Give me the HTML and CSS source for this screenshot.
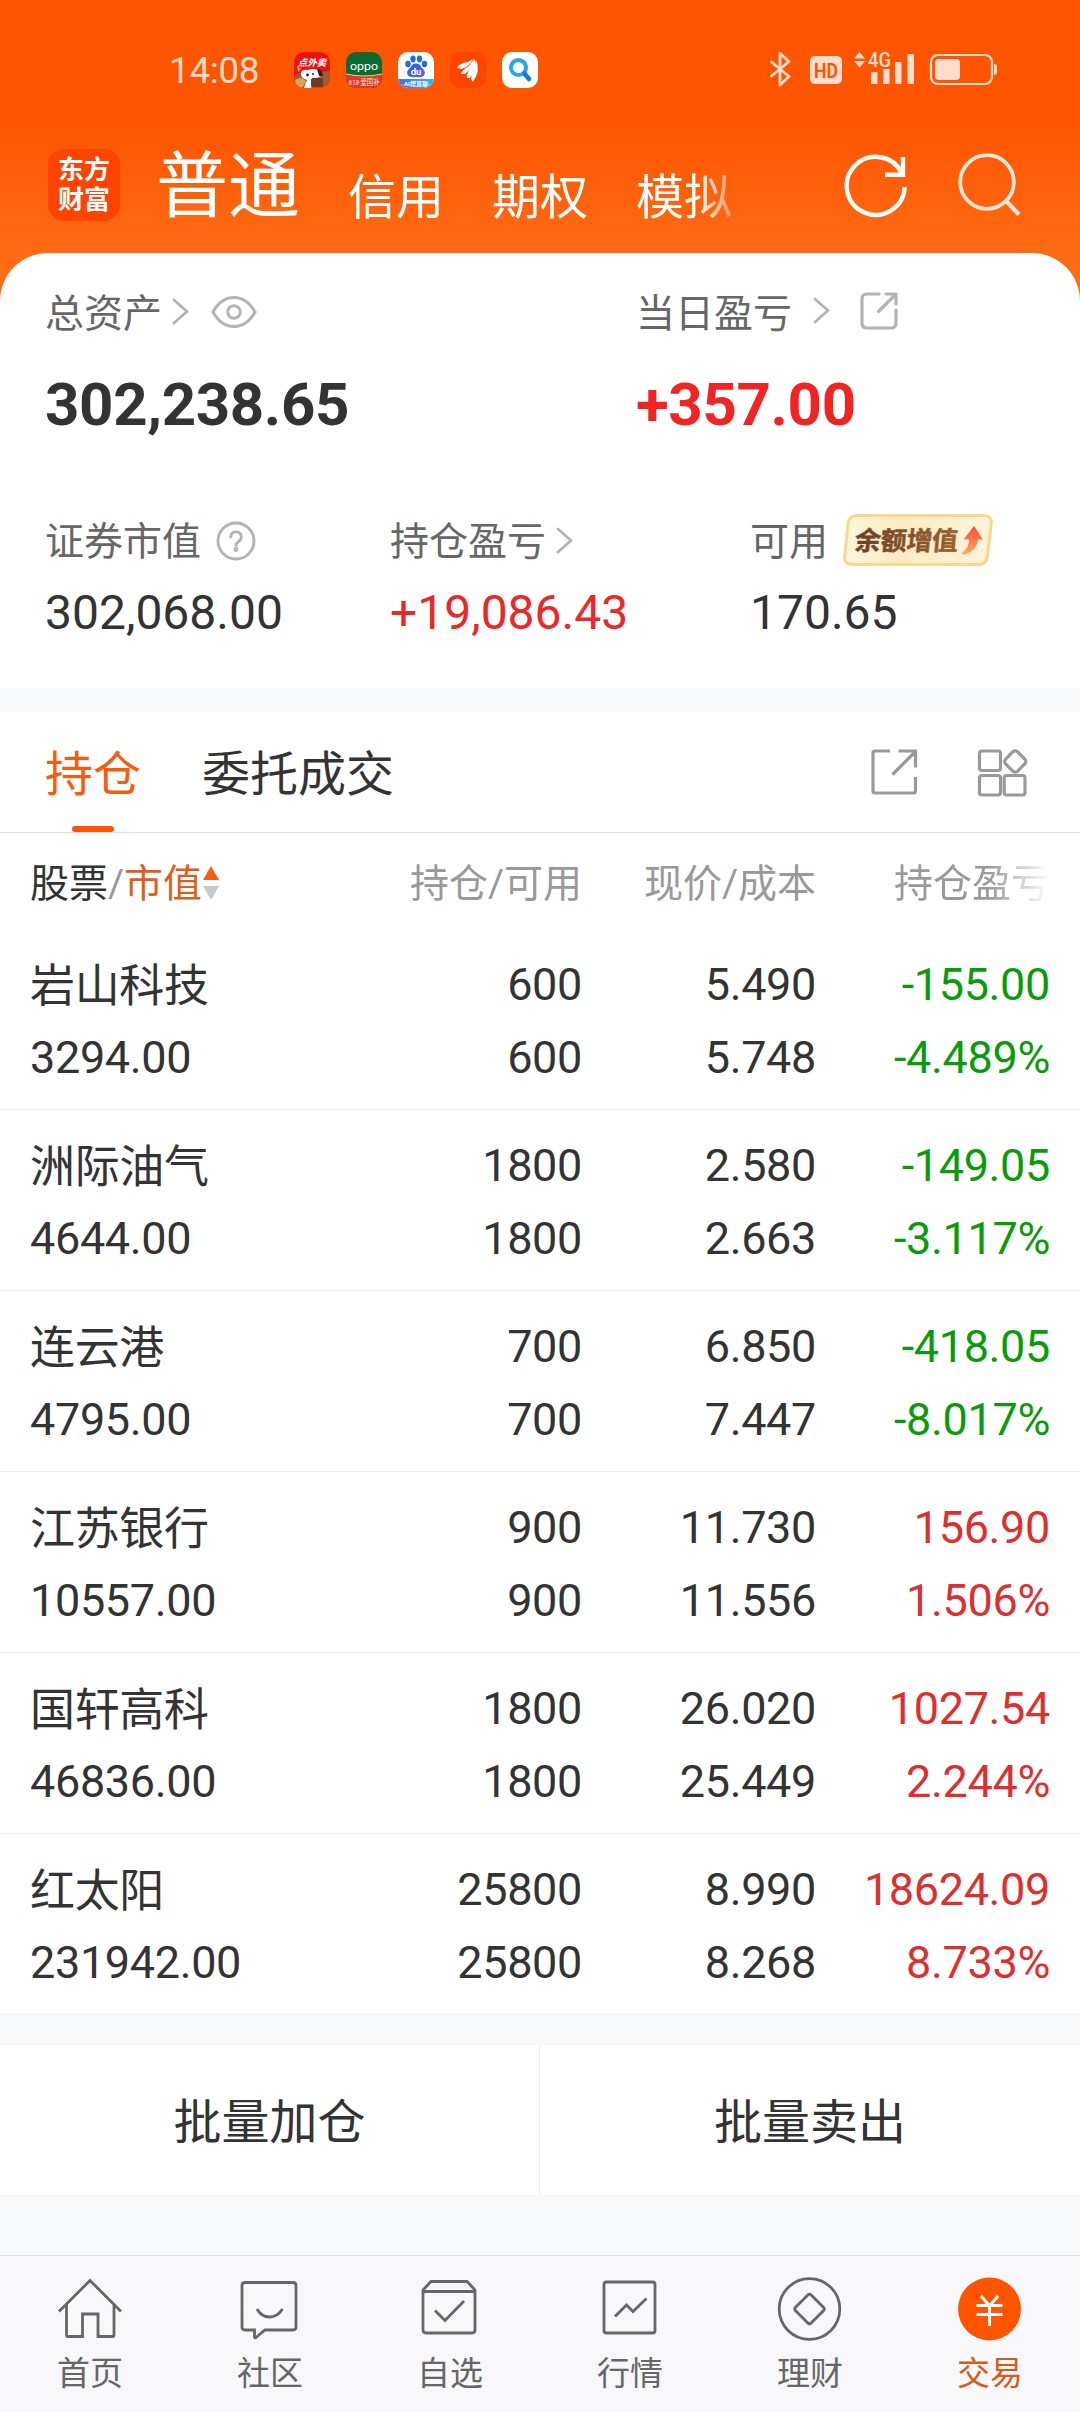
FILE: index.html
```html
<!DOCTYPE html>
<html lang="zh-CN">
<head>
<meta charset="utf-8">
<title>普通交易 - 持仓</title>
<link rel="stylesheet" href="styles.css">
</head>
<body>
<div class="app">
  <div class="status">
    <span class="clock">14:08</span>
    <div class="notices">
      <svg width="36" height="36" viewBox="0 0 36 36">
        <defs><clipPath id="tile"><rect width="36" height="36" rx="10"/></clipPath></defs>
        <g clip-path="url(#tile)">
          <rect width="36" height="36" fill="#f0100f"/>
          <path d="M0 25Q6 18 14 21L36 19V36H0Z" fill="#a35a2c"/>
          <path d="M1 28Q8 23 12 30L8 36H2Z" fill="#d8a35c"/>
          <path d="M3 14L7 17L4 20Z" fill="#f3b34a"/>
          <path d="M7 21Q8 17 14 18Q23 15 27 21Q28 26 20 26L17 36H10L13 28Q6 26 7 21Z" fill="#fff"/>
          <path d="M23 17Q29 18 29 24L25 24Z" fill="#39211a"/>
          <circle cx="13.500" cy="23" r="1.400" fill="#222"/><circle cx="19" cy="22" r="1" fill="#222"/>
          <rect x="17" y="26" width="12" height="9" rx="2" fill="#6d3c20"/>
          <text x="18" y="13.500" class="bold italic" font-size="9.500" text-anchor="middle" fill="#fff">点外卖</text>
        </g>
      </svg>
      <svg width="36" height="36" viewBox="0 0 36 36">
        <g clip-path="url(#tile)">
          <rect width="36" height="36" fill="#0b6b33"/>
          <path d="M0 22Q18 26 36 22V36H0Z" fill="#dc3a26"/>
          <path d="M0 22Q18 26 36 22" stroke="#e8d36a" fill="none"/>
          <text x="18" y="17.500" font-size="11.500" text-anchor="middle" textLength="28" lengthAdjust="spacingAndGlyphs" fill="#fff">oppo</text>
          <text x="18" y="33" font-size="8" text-anchor="middle" textLength="31" lengthAdjust="spacingAndGlyphs" fill="#ffe9da"><tspan class="italic">618</tspan>·爱国补</text>
        </g>
      </svg>
      <svg width="36" height="36" viewBox="0 0 36 36">
        <defs><linearGradient id="paw" x1="0" x2="1" y2="1"><stop offset=".3" stop-color="#2368e8"/><stop offset="1" stop-color="#8a4be8"/></linearGradient><linearGradient id="strip"><stop offset="0" stop-color="#4a6ff0"/><stop offset="1" stop-color="#26b9f5"/></linearGradient></defs>
        <g clip-path="url(#tile)">
          <rect width="36" height="36" fill="#fff"/>
          <g fill="#2368e8"><ellipse cx="10" cy="12" rx="2.700" ry="3.300"/><ellipse cx="15" cy="7" rx="2.600" ry="3.400"/><ellipse cx="21.500" cy="7" rx="2.600" ry="3.400"/><ellipse cx="26.500" cy="12" rx="2.700" ry="3.300"/></g>
          <path d="M18 11.500Q22 11.500 23.500 15.500Q28 19 26.500 22.500Q25 26 18 25Q11 26 9.500 22.500Q8 19 12.500 15.500Q14 11.500 18 11.500Z" fill="url(#paw)"/>
          <text x="18" y="23" class="bold" font-size="9.500" text-anchor="middle" fill="#fff">du</text>
          <path d="M0 27H36V36H0Z" fill="url(#strip)"/>
          <text x="18" y="33.800" class="bold" font-size="6" text-anchor="middle" fill="#fff">·AI搜直聊·</text>
        </g>
      </svg>
      <svg width="36" height="36" viewBox="0 0 36 36">
        <rect width="36" height="36" rx="10" fill="#ff4300"/>
        <path d="M7 16Q9 11 18 10L23 7Q20 14 12 17Z M11 22Q12 18 19 14L24 7Q24 15 15 22Z M17 26Q16 22 21 16L25 7Q27 16 20 26Z M23 30Q19 26 24 19L26 8Q31 18 23 30Z" fill="#fff"/>
      </svg>
      <svg width="36" height="36" viewBox="0 0 36 36">
        <rect width="36" height="36" rx="10" fill="#fff"/>
        <circle cx="16.500" cy="15.500" r="7.500" fill="none" stroke="#27a5e9" stroke-width="4"/>
        <path d="M22.500 21.500L27 27" stroke="#1679dc" stroke-width="4.500" stroke-linecap="round"/>
      </svg>
    </div>
    <svg class="signals" width="228" height="56" viewBox="770 42 228 56" fill="#ffdccb">
      <path d="M771.500 62L789 76.500L780 85V53.500L789 61.500L771.500 76" fill="none" stroke="#ffdccb" stroke-width="2.800" stroke-linejoin="round" stroke-linecap="round"/>
      <rect x="810" y="56" width="32" height="28" rx="5"/>
      <text x="826" y="77.500" class="bold" font-size="21" text-anchor="middle" textLength="24" lengthAdjust="spacingAndGlyphs" fill="#ff5500">HD</text>
      <path d="M854 58.500L859.500 52L865 58.500ZM854 61L859.500 67.500L865 61Z"/>
      <text x="868" y="67" class="medium" font-size="20" textLength="23" lengthAdjust="spacingAndGlyphs">4G</text>
      <rect x="871" y="72" width="6.500" height="12" rx="1"/><rect x="883" y="69" width="6.500" height="15" rx="1"/><rect x="895" y="62" width="6.500" height="22" rx="1"/><rect x="907.500" y="54" width="6.500" height="30" rx="1"/>
      <rect x="931" y="55" width="61" height="29" rx="7" fill="none" stroke="#ffdccb" stroke-width="2.200"/>
      <rect x="935" y="59" width="25" height="21" rx="4"/>
      <path d="M994 64Q997 64 997 67V72Q997 75 994 75Z"/>
    </svg>
  </div>

  <header class="titlebar">
    <div class="logo">东方<br>财富</div>
    <nav class="accounts">
      <span class="account current">普通</span>
      <span class="account">信用</span>
      <span class="account">期权</span>
      <span class="account">模拟</span>
    </nav>
    <svg class="actions" width="180" height="72" viewBox="842 150 180 72" fill="none">
      <path d="M902 173.600A29 29 0 1 0 904.700 187" stroke="#fff" stroke-width="4.400"/>
      <path d="M903 157V174.700H885" stroke="#fff" stroke-width="4.400"/>
      <circle cx="987" cy="182" r="26.800" stroke="#ffe5d8" stroke-width="3.800"/>
      <path d="M1005.500 200.500L1019 214.500" stroke="#ffe5d8" stroke-width="4.200"/>
    </svg>
  </header>

  <section class="summary">
    <div class="totals">
      <div>
        <div class="label">总资产
          <svg class="chev" width="17" height="27" viewBox="0 0 17 27"><path d="M2 2L15 13.500L2 25"/></svg>
          <svg class="eye" width="46" height="34" viewBox="0 0 46 34"><path d="M2 17Q10 2.500 23 2.500T44 17Q36 31.500 23 31.500T2 17Z"/><circle cx="23" cy="17" r="6.300"/></svg>
        </div>
        <div class="big">302,238.65</div>
      </div>
      <div>
        <div class="label">当日盈亏
          <svg class="chev day" width="17" height="27" viewBox="0 0 17 27"><path d="M2 2L15 13.500L2 25"/></svg>
          <svg class="share" width="40" height="40" viewBox="0 0 40 40"><path d="M20 3H8Q3 3 3 8V32Q3 37 8 37H32Q37 37 37 32V19M27 3H37V13M36 4L19.500 20.500"/></svg>
        </div>
        <div class="big up">+357.00</div>
      </div>
    </div>
    <div class="details">
      <div>
        <div class="label">证券市值
          <svg class="help" width="40" height="40" viewBox="0 0 40 40"><circle cx="20" cy="20" r="18"/><path d="M14.700 16.200Q14.700 10.800 20 10.800T25.300 16Q25.300 18.500 22.500 20.500Q20 22.300 20 24.500"/><circle cx="20" cy="28.500" r="1" class="dot"/></svg>
        </div>
        <div class="value">302,068.00</div>
      </div>
      <div>
        <div class="label">持仓盈亏
          <svg class="chev near" width="17" height="27" viewBox="0 0 17 27"><path d="M2 2L15 13.500L2 25"/></svg>
        </div>
        <div class="value up">+19,086.43</div>
      </div>
      <div>
        <div class="label">可用
          <svg class="badge" width="150" height="52" viewBox="0 0 150 52">
            <defs>
              <linearGradient id="cream"><stop offset="0" stop-color="#fff5dd"/><stop offset=".35" stop-color="#ffebc4"/><stop offset="1" stop-color="#fff3dc"/></linearGradient>
              <linearGradient id="brown"><stop offset="0" stop-color="#6b4024"/><stop offset="1" stop-color="#9b622f"/></linearGradient>
              <linearGradient id="flame" x2="0" y2="1"><stop offset="0" stop-color="#f84c38"/><stop offset="1" stop-color="#ffa765"/></linearGradient>
            </defs>
            <path d="M14 1.500H140Q149 1.500 148.300 9L144.500 42Q143.500 50.500 136 50.500H10Q1 50.500 1.700 43L5 10Q6 1.500 14 1.500Z" fill="url(#cream)" stroke="#f6d98a" stroke-width="3"/>
            <text x="14.500" y="36" class="bold" transform="skewX(-5)" font-size="26" textLength="103" fill="url(#brown)" stroke="url(#brown)" stroke-width=".5">余额增值</text>
            <path d="M131 12L140 25.500H135Q134.500 36 122 40.500Q118 40.500 119.500 38.500Q126.500 33 126 25.500H120.500Z" fill="url(#flame)"/>
          </svg>
        </div>
        <div class="value">170.65</div>
      </div>
    </div>
  </section>

  <section class="panel">
    <div class="tabs">
      <span class="tab active">持仓</span>
      <span class="tab">委托成交</span>
      <svg class="tools" width="160" height="50" viewBox="869 747 160 50">
        <path d="M890 751H875Q873 751 873 753V791Q873 793 875 793H913.500Q915.500 793 915.500 791V777M898.500 751H915.500V767.500M915 752L892.500 774.500"/>
        <rect x="979.500" y="751" width="21" height="19.500" rx="2.500"/><rect x="979.500" y="775.500" width="21" height="19.500" rx="2.500"/><rect x="1004.200" y="775.500" width="20.800" height="19.500" rx="2.500"/>
        <rect x="1006.700" y="753" width="17" height="17" rx="3.500" transform="rotate(45 1015.200 761.500)"/>
      </svg>
    </div>
    <div class="row head">
      <span class="sorter"><b>股票</b>/<i>市值</i><svg width="16" height="34" viewBox="0 0 16 34"><path d="M8 0L16 14H0Z" fill="#f65e12"/><path d="M0 20H16L8 34Z" fill="#c8c8c8"/></svg></span>
      <span>持仓/可用</span><span>现价/成本</span><span class="fade">持仓盈亏</span>
    </div>
    <div class="row"><span><b class="name">岩山科技</b>3294.00</span><span>600<br>600</span><span>5.490<br>5.748</span><span class="loss">-155.00<br>-4.489%</span></div>
    <div class="row"><span><b class="name">洲际油气</b>4644.00</span><span>1800<br>1800</span><span>2.580<br>2.663</span><span class="loss">-149.05<br>-3.117%</span></div>
    <div class="row"><span><b class="name">连云港</b>4795.00</span><span>700<br>700</span><span>6.850<br>7.447</span><span class="loss">-418.05<br>-8.017%</span></div>
    <div class="row"><span><b class="name">江苏银行</b>10557.00</span><span>900<br>900</span><span>11.730<br>11.556</span><span class="gain">156.90<br>1.506%</span></div>
    <div class="row"><span><b class="name">国轩高科</b>46836.00</span><span>1800<br>1800</span><span>26.020<br>25.449</span><span class="gain">1027.54<br>2.244%</span></div>
    <div class="row"><span><b class="name">红太阳</b>231942.00</span><span>25800<br>25800</span><span>8.990<br>8.268</span><span class="gain">18624.09<br>8.733%</span></div>
  </section>

  <div class="batch"><button>批量加仓</button><button>批量卖出</button></div>

  <nav class="bottom">
    <a class="item"><svg viewBox="0 0 66 66"><path d="M2 35.500L33 4.500L64 35.500M9.500 28.500V59Q9.500 60.500 11 60.500H25.500V38H41V60.500H55.500Q57 60.500 57 59V28.500"/></svg>首页</a>
    <a class="item"><svg viewBox="0 0 66 66"><path d="M8 6.500H56Q59 6.500 59 9.500V51Q59 54 56 54H28L19 61.500Q17.500 62.500 17.500 60.500V54H8Q5 54 5 51V9.500Q5 6.500 8 6.500ZM20 33Q24.500 41 32.500 41T45.500 33"/></svg>社区</a>
    <a class="item"><svg viewBox="0 0 66 66"><path d="M14 5.500H50L58 14V54Q58 57 55 57H9Q6 57 6 54V14ZM6 15.500H58M18 34.500L28 44.500L47 25"/></svg>自选</a>
    <a class="item"><svg viewBox="0 0 66 66"><rect x="7" y="6" width="51" height="51" rx="2.500"/><path d="M18 40.500L29.500 29L36 35.500L49.500 22.500"/></svg>行情</a>
    <a class="item"><svg viewBox="0 0 66 66"><circle cx="32.500" cy="33" r="30.300"/><rect x="21.500" y="22" width="22" height="22" rx="2" transform="rotate(45 32.500 33)"/></svg>理财</a>
    <a class="item on"><svg viewBox="0 0 66 66"><circle cx="32.500" cy="33" r="31.500" class="disc"/><path d="M24 20L32.500 30L41 20M19.500 29.500H45.500M19.500 38.500H45.500M32.500 29.500V50"/></svg>交易</a>
  </nav>
</div>
</body>
</html>
```
FILE: styles.css
```css
* { box-sizing: border-box; }
body {
  margin: 0;
  font-family: Roboto, "Noto Sans CJK SC", sans-serif;
  color: #333;
  background: #f7f8fa;
}
svg { display: block; flex: none; }
.bold { font-weight: 700; }
.medium { font-weight: 500; }
.italic { font-style: italic; }

.app {
  width: 1080px;
  height: 2412px;
  display: flex;
  flex-direction: column;
  overflow: hidden;
  background: linear-gradient(#ff5500 0 125px, #ff6a14 245px, #ff6e18 310px, #f7f8fa 310px);
}

/* system status bar */
.status {
  height: 100px;
  padding: 40px 82px 0 169px;
  display: flex;
  align-items: center;
}
.clock { width: 125px; padding-top: 2px; font-size: 37px; line-height: 40px; letter-spacing: -0.4px; color: #ffd9c6; }
.notices { display: flex; gap: 16px; }
.signals { margin-left: auto; }

/* account switcher */
.titlebar { height: 153px; padding-left: 48px; display: flex; }
.logo {
  width: 72px;
  height: 72px;
  margin-top: 49px;
  padding-top: 6px;
  border-radius: 16px;
  background: #ff4300;
  color: #fff;
  font-size: 26px;
  font-weight: 700;
  line-height: 30px;
  text-align: center;
}
.accounts {
  width: 594px;
  margin-left: 36px;
  display: flex;
  gap: 48px;
  color: #fff;
  -webkit-mask-image: linear-gradient(90deg, #000 540px, transparent 594px);
  mask-image: linear-gradient(90deg, #000 540px, transparent 594px);
}
.account { flex: none; margin-top: 68px; font-size: 48px; line-height: 60px; }
.account.current { margin-top: 47px; font-size: 72px; line-height: 80px; }
.actions { margin: 50px 0 0 92px; }

/* asset summary card */
.summary {
  height: 435px;
  padding: 37px 0 0 45px;
  border-radius: 48px 48px 0 0;
  background: #fff;
}
.totals { display: grid; grid-template-columns: 591px 1fr; }
.details { margin-top: 83px; display: grid; grid-template-columns: 345px 360px 1fr; }
.label {
  height: 48px;
  display: flex;
  align-items: center;
  font-size: 39px;
  line-height: 48px;
  color: #666;
}
.label svg { fill: none; stroke: #b3b3b3; stroke-width: 2.8; }
.label .chev { margin: -6px 0 0 10px; stroke-linecap: round; }
.label .chev.day { margin: -8px 0 0 21px; }
.label .chev.near { margin-top: -4px; }
.label .eye { margin: -5px 0 0 22px; stroke-width: 3; }
.label .share { margin: -7px 0 0 29px; stroke-width: 3.2; stroke-linecap: round; stroke-linejoin: round; }
.help { margin: -3px 0 0 15px; stroke-linecap: round; }
.label .badge { margin: -4px 0 0 15px; stroke: none; }
.big { margin-top: 37px; font-size: 60px; font-weight: 700; line-height: 60px; letter-spacing: -0.35px; }
.value { margin-top: 19px; font-size: 48px; line-height: 56px; }
.up { color: #eb2828; }
.big.up { color: #f12424; }

/* holdings */
.panel { margin-top: 24px; background: #fff; }
.tabs {
  height: 121px;
  padding: 0 51px 0 45px;
  display: flex;
  gap: 61px;
  border-bottom: 1px solid #dedede;
}
.tab { position: relative; padding-top: 33px; font-size: 48px; line-height: 60px; }
.tab.active { color: #f65c10; }
.tab.active::after {
  content: "";
  position: absolute;
  left: 27px;
  bottom: 0;
  width: 42px;
  height: 6px;
  border-radius: 3px;
  background: #ff5500;
}
.tools {
  margin: 35px 0 0 auto;
  fill: none;
  stroke: #999;
  stroke-width: 3.2;
}
.row {
  height: 181px;
  padding: 19px 30px 0;
  display: grid;
  grid-template-columns: 1fr 252px 234px 234px;
  border-bottom: 1px solid #ececec;
  font-size: 45px;
  line-height: 73px;
  letter-spacing: -0.35px;
  text-align: right;
}
.row > :first-child { text-align: left; }
.name { display: block; height: 73px; padding-top: 2px; font-weight: 400; }
.row.head {
  height: 96px;
  padding-top: 27px;
  border: 0;
  font-size: 39px;
  line-height: 48px;
  letter-spacing: 0;
  color: #999;
}
.sorter { display: flex; }
.sorter b { font-weight: 400; color: #333; }
.sorter i { font-style: normal; color: #de5f19; }
.sorter svg { margin: 6px 0 0 1px; }
.fade {
  -webkit-mask-image: linear-gradient(90deg, #000 172px, transparent 234px);
  mask-image: linear-gradient(90deg, #000 172px, transparent 234px);
}
.loss { color: #0a9b0a; }
.gain { color: #de2f2f; }

.batch { margin-top: 30px; height: 150px; display: grid; grid-template-columns: 539px 1fr; background: #fff; }
.batch button {
  padding: 5px 0 0;
  border: 0;
  background: none;
  font: 48px/60px Roboto, "Noto Sans CJK SC", sans-serif;
  color: #333;
}
.batch button + button { border-left: 1px solid #ececec; }

/* bottom navigation */
.bottom {
  margin-top: auto;
  height: 157px;
  display: flex;
  border-top: 1px solid #dfe2e5;
  background: #f8f8fb;
}
.item {
  flex: 1;
  padding-top: 20px;
  display: flex;
  flex-direction: column;
  align-items: center;
  gap: 12px;
  font-size: 33px;
  line-height: 40px;
  color: #666;
}
.item svg { width: 66px; height: 66px; fill: none; stroke: #666; stroke-width: 2.8; }
.item.on { color: #d85a18; }
.item.on svg { stroke: #fff; stroke-width: 3; }
.item .disc { fill: #ff5500; stroke: none; }
```
